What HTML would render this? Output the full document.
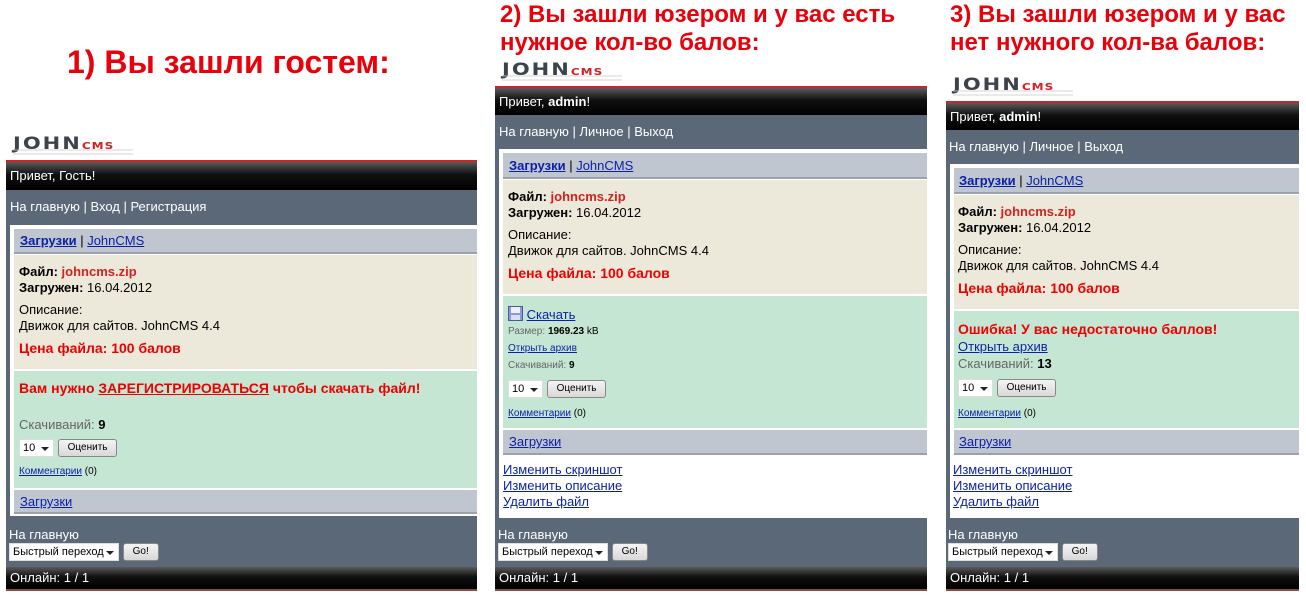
<!DOCTYPE html>
<html><head><meta charset="utf-8"><style>
*{margin:0;padding:0;box-sizing:border-box}
body{width:1306px;height:600px;background:#fff;position:relative;overflow:hidden;font-family:"Liberation Sans",Arial,sans-serif;font-size:13px;color:#000}
.a{position:absolute}
.t{color:#e8000a;font-weight:bold;white-space:nowrap}
.logo{position:absolute;font-weight:900;font-size:21px;letter-spacing:2px;color:#3c434c;line-height:18px;white-space:nowrap;font-family:"DejaVu Sans","Liberation Sans",sans-serif;transform:scaleY(0.8);transform-origin:left top}
.logo span{color:#d42020;font-size:12px;letter-spacing:1px}
.logo:after{content:"";position:absolute;left:0;top:17px;width:120px;height:4px;border-top:1px solid #ccc;border-bottom:1px solid #ccc}
.red{background:#c62828}
.blk{background:linear-gradient(#5a5a5a,#101010 45%,#000);color:#fff;padding-left:4px;font-size:13px}
.sl{background:#5a6878}
.wh{background:#fff}
.bar{background:#c0c6d0;border-bottom:2px solid #9aa2ae}
.bg{background:#ede9da}
.gr{background:#c6e6d4}
a,.l{color:#0b1fa8;text-decoration:underline}
.w{color:#fff}
.rt{color:#e00;font-weight:bold}
.g{color:#666}
.sel{display:inline-block;background:#fff;font-size:11px;border:1px solid #ddd;height:18px;line-height:16px;padding:0 3px;vertical-align:middle;position:relative}
.sel:after{content:"";position:absolute;right:4px;top:7px;border:4px solid transparent;border-top:4px solid #222}
.btn{display:inline-block;background:linear-gradient(#f4f4f4,#d8d8d8);border:1px solid #888;border-radius:3px;font-size:10px;height:18px;line-height:16px;padding:0 9px;vertical-align:middle}
.sm{font-size:10px}
</style></head><body>

<!-- Titles -->
<div class="a t" style="left:67px;top:44px;font-size:32px">1) Вы зашли гостем:</div>
<div class="a t" style="left:500px;top:1px;font-size:24px;line-height:28px">2) Вы зашли юзером и у вас есть<br>нужное кол-во балов:</div>
<div class="a t" style="left:950px;top:1px;font-size:24px;line-height:28px">3) Вы зашли юзером и у вас<br>нет нужного кол-ва балов:</div>

<!-- Panel 1 -->
<div class="logo" style="left:13px;top:136px">JOHN<span>CMS</span></div>
<div class="a red" style="left:6px;top:160px;width:471px;height:2px"></div>
<div class="a blk" style="left:6px;top:162px;width:471px;height:28px;line-height:28px">Привет, Гость!</div>
<div class="a sl" style="left:6px;top:190px;width:471px;height:377px"></div>
<div class="a w" style="left:10px;top:199px">На главную | Вход | Регистрация</div>
<div class="a wh" style="left:10px;top:225px;width:467px;height:291px"></div>
<div class="a bar" style="left:14px;top:229px;width:463px;height:25px;padding:4px 6px"><a><b>Загрузки</b></a> | <a>JohnCMS</a></div>
<div class="a bg" style="left:14px;top:255px;width:463px;height:114px;padding:9px 5px;line-height:16px">
<b>Файл: </b><b style="color:#d42020">johncms.zip</b><br><b>Загружен:</b> 16.04.2012
<div style="margin-top:6px">Описание:<br>Движок для сайтов. JohnCMS 4.4</div>
<div class="rt" style="font-size:14px;margin-top:6px">Цена файла: 100 балов</div></div>
<div class="a gr" style="left:14px;top:371px;width:463px;height:117px;padding:9px 5px">
<div class="rt" style="font-size:14px">Вам нужно <u>ЗАРЕГИСТРИРОВАТЬСЯ</u> чтобы скачать файл!</div>
<div style="margin-top:21px"><span class="g">Скачиваний:</span> <b>9</b></div>
<div style="margin-top:7px"><span class="sel" style="width:35px">10</span> <span class="btn">Оценить</span></div>
<div class="sm" style="margin-top:9px"><a>Комментарии</a> (0)</div></div>
<div class="a bar" style="left:14px;top:490px;width:463px;height:24px;padding:4px 6px"><a>Загрузки</a></div>
<div class="a w" style="left:9px;top:527px">На главную</div>
<div class="a" style="left:9px;top:543px"><span class="sel" style="width:110px">Быстрый переход</span> <span class="btn">Go!</span></div>
<div class="a blk" style="left:6px;top:567px;width:471px;height:22px;line-height:22px">Онлайн: 1 / 1</div>
<div class="a" style="left:6px;top:589px;width:471px;height:2px;background:#8b4a44"></div>

<!-- Panel 2 -->
<div class="logo" style="left:502px;top:62px">JOHN<span>CMS</span></div>
<div class="a red" style="left:495px;top:86px;width:432px;height:2px"></div>
<div class="a blk" style="left:495px;top:88px;width:432px;height:27px;line-height:27px">Привет, <b>admin</b>!</div>
<div class="a sl" style="left:495px;top:115px;width:432px;height:452px"></div>
<div class="a w" style="left:499px;top:124px">На главную | Личное | Выход</div>
<div class="a wh" style="left:499px;top:149px;width:428px;height:369px"></div>
<div class="a bar" style="left:503px;top:153px;width:424px;height:26px;padding:5px 6px"><a><b>Загрузки</b></a> | <a>JohnCMS</a></div>
<div class="a bg" style="left:503px;top:180px;width:424px;height:114px;padding:9px 5px;line-height:16px">
<b>Файл: </b><b style="color:#d42020">johncms.zip</b><br><b>Загружен:</b> 16.04.2012
<div style="margin-top:6px">Описание:<br>Движок для сайтов. JohnCMS 4.4</div>
<div class="rt" style="font-size:14px;margin-top:6px">Цена файла: 100 балов</div></div>
<div class="a gr" style="left:503px;top:296px;width:424px;height:132px;padding:10px 5px;line-height:17px">
<div><svg width="15" height="15" style="vertical-align:-2px"><rect x="0.5" y="0.5" width="14" height="14" fill="#8a9ad8" stroke="#4a5aa0"/><rect x="3" y="1" width="9" height="6" fill="#eef"/><rect x="3" y="9" width="9" height="5" fill="#dde"/></svg> <a style="font-size:13px">Скачать</a></div>
<div class="sm"><span class="g">Размер:</span> <b>1969.23</b> kB</div>
<div class="sm"><a>Открыть архив</a></div>
<div class="sm"><span class="g">Скачиваний:</span> <b>9</b></div>
<div style="margin-top:5px"><span class="sel" style="width:35px">10</span> <span class="btn">Оценить</span></div>
<div class="sm" style="margin-top:7px"><a>Комментарии</a> (0)</div></div>
<div class="a bar" style="left:503px;top:430px;width:424px;height:25px;padding:4px 6px"><a>Загрузки</a></div>
<div class="a" style="left:503px;top:462px;line-height:16px"><a>Изменить скриншот</a><br><a>Изменить описание</a><br><a>Удалить файл</a></div>
<div class="a w" style="left:498px;top:527px">На главную</div>
<div class="a" style="left:498px;top:543px"><span class="sel" style="width:110px">Быстрый переход</span> <span class="btn">Go!</span></div>
<div class="a blk" style="left:495px;top:567px;width:432px;height:22px;line-height:22px">Онлайн: 1 / 1</div>
<div class="a" style="left:495px;top:589px;width:432px;height:2px;background:#8b4a44"></div>

<!-- Panel 3 -->
<div class="logo" style="left:953px;top:77px">JOHN<span>CMS</span></div>
<div class="a red" style="left:946px;top:101px;width:353px;height:2px"></div>
<div class="a blk" style="left:946px;top:103px;width:353px;height:27px;line-height:27px">Привет, <b>admin</b>!</div>
<div class="a sl" style="left:946px;top:130px;width:353px;height:437px"></div>
<div class="a w" style="left:949px;top:139px">На главную | Личное | Выход</div>
<div class="a wh" style="left:950px;top:164px;width:349px;height:354px"></div>
<div class="a bar" style="left:954px;top:168px;width:345px;height:26px;padding:5px 5px"><a><b>Загрузки</b></a> | <a>JohnCMS</a></div>
<div class="a bg" style="left:954px;top:195px;width:345px;height:114px;padding:9px 4px;line-height:16px">
<b>Файл: </b><b style="color:#d42020">johncms.zip</b><br><b>Загружен:</b> 16.04.2012
<div style="margin-top:6px">Описание:<br>Движок для сайтов. JohnCMS 4.4</div>
<div class="rt" style="font-size:14px;margin-top:6px">Цена файла: 100 балов</div></div>
<div class="a gr" style="left:954px;top:311px;width:345px;height:117px;padding:9px 4px;line-height:17px">
<div class="rt" style="font-size:14px;line-height:18px">Ошибка! У вас недостаточно баллов!</div>
<div><a>Открыть архив</a></div>
<div><span class="g">Скачиваний:</span> <b>13</b></div>
<div style="margin-top:6px"><span class="sel" style="width:35px">10</span> <span class="btn">Оценить</span></div>
<div class="sm" style="margin-top:8px"><a>Комментарии</a> (0)</div></div>
<div class="a bar" style="left:954px;top:430px;width:345px;height:25px;padding:4px 5px"><a>Загрузки</a></div>
<div class="a" style="left:953px;top:462px;line-height:16px"><a>Изменить скриншот</a><br><a>Изменить описание</a><br><a>Удалить файл</a></div>
<div class="a w" style="left:948px;top:527px">На главную</div>
<div class="a" style="left:948px;top:543px"><span class="sel" style="width:110px">Быстрый переход</span> <span class="btn">Go!</span></div>
<div class="a blk" style="left:946px;top:567px;width:353px;height:22px;line-height:22px">Онлайн: 1 / 1</div>
<div class="a" style="left:946px;top:589px;width:353px;height:2px;background:#8b4a44"></div>

</body></html>
